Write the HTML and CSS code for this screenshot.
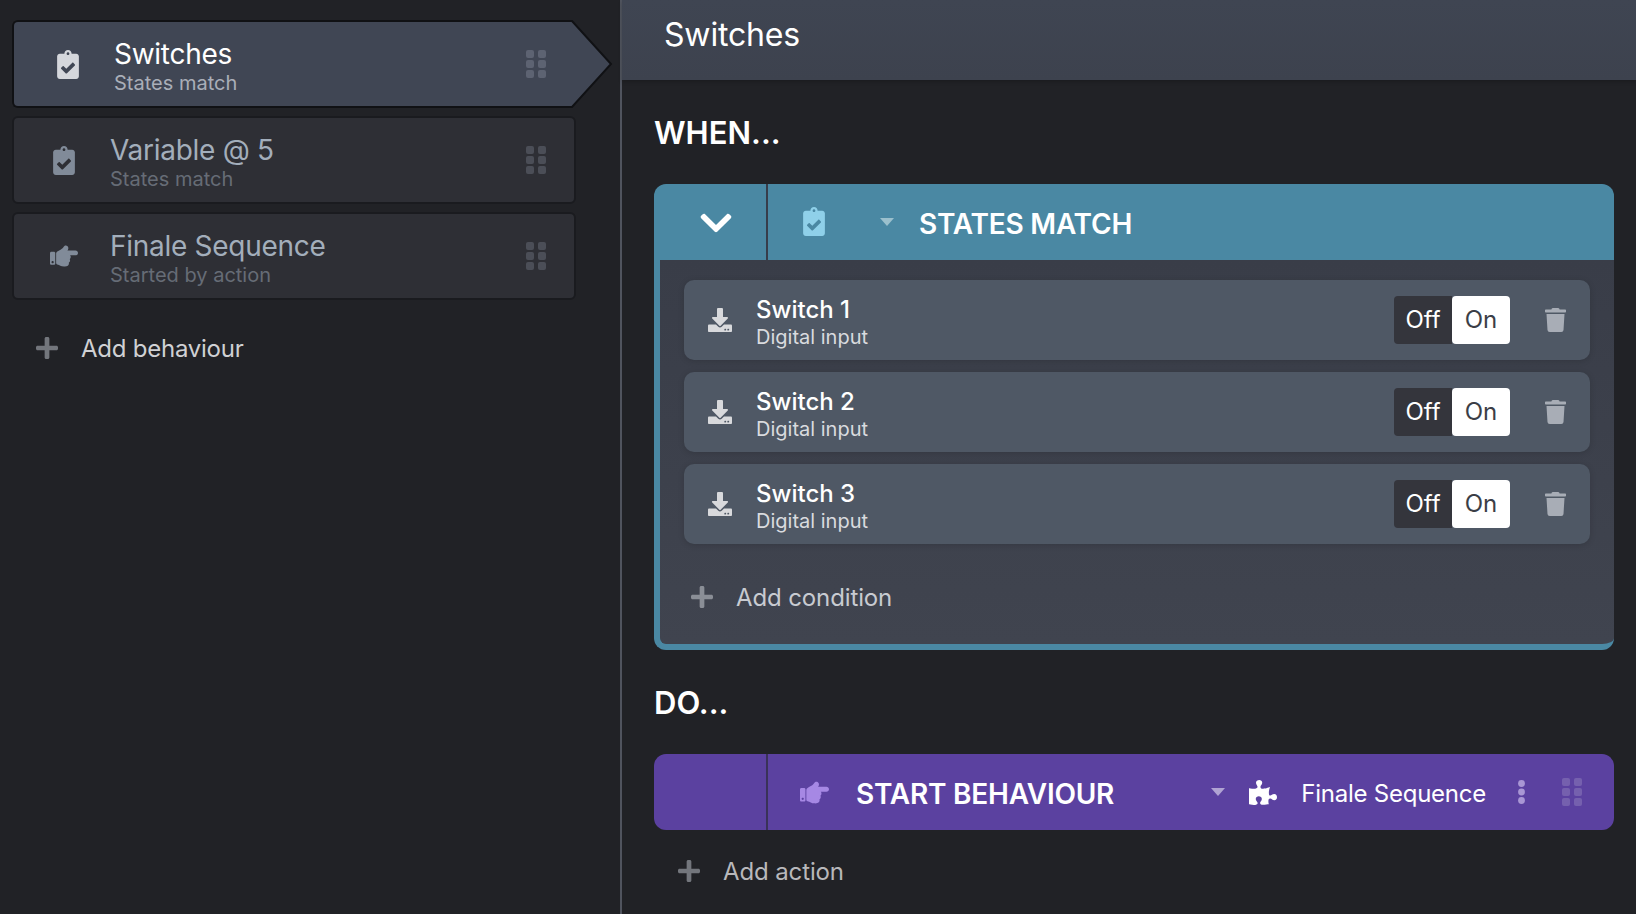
FILE: index.html
```html
<!DOCTYPE html>
<html lang="en">
<head>
<meta charset="utf-8">
<title>Switches</title>
<link rel="stylesheet" href="styles.css">
</head>
<body>
<svg class="sprite" aria-hidden="true">
  <symbol id="i-clip" viewBox="0 0 384 512"><path d="M336 64h-80c0-35.3-28.7-64-64-64s-64 28.7-64 64H48C21.5 64 0 85.5 0 112v352c0 26.5 21.5 48 48 48h288c26.5 0 48-21.5 48-48V112c0-26.5-21.5-48-48-48zM192 40c13.3 0 24 10.7 24 24s-10.7 24-24 24-24-10.7-24-24 10.7-24 24-24zm121.2 231.8l-143 141.8c-4.7 4.7-12.3 4.6-17-.1l-82.6-83.3c-4.7-4.7-4.6-12.3.1-17L99.1 285c4.7-4.7 12.3-4.6 17 .1l46 46.4 106-105.2c4.7-4.7 12.3-4.6 17 .1l28.2 28.4c4.7 4.8 4.6 12.3-.1 17z"/></symbol>
  <symbol id="i-hand" viewBox="0 0 512 512"><path d="M512 199.652c0 23.625-20.65 43.826-44.8 43.826h-99.851c16.34 17.048 18.346 49.766-6.299 70.944 14.288 22.829 2.147 53.017-16.45 62.315C353.574 425.878 322.654 448 272 448c-2.746 0-13.276-.203-16-.195-61.971.168-76.894-31.065-123.731-38.315C120.596 407.683 112 397.599 112 385.786V214.261l.002-.001c.011-18.366 10.607-35.889 28.464-43.845 28.886-12.994 95.413-49.038 107.534-77.323 7.797-18.194 21.384-29.084 40-29.092 34.222-.014 57.752 35.098 44.119 66.908-3.583 8.359-8.312 16.67-14.153 24.918H467.2c23.45 0 44.8 20.543 44.8 43.826zM96 200v192c0 13.255-10.745 24-24 24H24c-13.255 0-24-10.745-24-24V200c0-13.255 10.745-24 24-24h48c13.255 0 24 10.745 24 24zM68 368c0-11.046-8.954-20-20-20s-20 8.954-20 20 8.954 20 20 20 20-8.954 20-20z"/></symbol>
  <symbol id="i-down" viewBox="0 0 512 512"><path d="M216 0h80c13.3 0 24 10.7 24 24v168h87.7c17.8 0 26.7 21.5 14.1 34.1L269.7 378.3c-7.5 7.5-19.8 7.5-27.3 0L90.1 226.1c-12.6-12.6-3.7-34.1 14.1-34.1H192V24c0-13.3 10.7-24 24-24zm296 376v112c0 13.3-10.7 24-24 24H24c-13.3 0-24-10.7-24-24V376c0-13.3 10.7-24 24-24h146.7l49 49c20.1 20.1 52.5 20.1 72.6 0l49-49H488c13.3 0 24 10.7 24 24zm-124 88c0-11-9-20-20-20s-20 9-20 20 9 20 20 20 20-9 20-20zm64 0c0-11-9-20-20-20s-20 9-20 20 9 20 20 20 20-9 20-20z"/></symbol>
  <symbol id="i-trash" viewBox="0 0 448 512"><path d="M432 32H312l-9.4-18.7A24 24 0 0 0 281.1 0H166.8a23.72 23.72 0 0 0-21.4 13.3L136 32H16A16 16 0 0 0 0 48v32a16 16 0 0 0 16 16h416a16 16 0 0 0 16-16V48a16 16 0 0 0-16-16zM53.2 467a48 48 0 0 0 47.9 45h245.8a48 48 0 0 0 47.9-45L416 128H32z"/></symbol>
  <symbol id="i-puzzle" viewBox="0 0 576 512"><path d="M519.442 288.651c-41.519 0-59.5 31.593-82.058 31.593C377.409 320.244 432 144 432 144s-196.288 80-196.288-3.297c0-35.827 36.288-46.25 36.288-85.985C272 19.216 243.885 0 210.539 0c-34.654 0-66.366 18.891-66.366 56.346 0 41.364 31.711 59.277 31.711 81.75C175.885 207.719 0 166.758 0 166.758v333.237s178.635 41.047 178.635-28.662c0-22.473-40-40.107-40-81.471 0-37.456 29.25-56.346 63.577-56.346 33.673 0 61.788 19.216 61.788 54.717 0 39.735-36.288 50.158-36.288 85.985 0 60.803 129.675 25.73 181.23 25.73 0 0-34.725-120.101 25.827-120.101 35.962 0 46.423 36.152 86.308 36.152C556.712 416 576 387.99 576 354.443c0-34.199-18.962-65.792-56.558-65.792z"/></symbol>
  <symbol id="i-chev" viewBox="0 0 448 512"><path d="M207.029 381.476L12.686 187.132c-9.373-9.373-9.373-24.569 0-33.941l22.667-22.667c9.357-9.357 24.522-9.375 33.901-.04L224 284.505l154.745-154.021c9.379-9.335 24.544-9.317 33.901.04l22.667 22.667c9.373 9.373 9.373 24.569 0 33.941L240.971 381.476c-9.373 9.372-24.569 9.372-33.942 0z"/></symbol>
  <symbol id="i-plus" viewBox="0 0 448 448"><path d="M416 176H272V32c0-17.67-14.33-32-32-32h-32c-17.67 0-32 14.33-32 32v144H32c-17.67 0-32 14.33-32 32v32c0 17.67 14.33 32 32 32h144v144c0 17.67 14.33 32 32 32h32c17.67 0 32-14.33 32-32V272h144c17.67 0 32-14.33 32-32v-32c0-17.67-14.33-32-32-32z"/></symbol>
  <symbol id="i-grip" viewBox="0 0 20 28"><rect width="8" height="8" rx="2"/><rect x="12" width="8" height="8" rx="2"/><rect y="10" width="8" height="8" rx="2"/><rect x="12" y="10" width="8" height="8" rx="2"/><rect y="20" width="8" height="8" rx="2"/><rect x="12" y="20" width="8" height="8" rx="2"/></symbol>
  <symbol id="i-kebab" viewBox="0 0 7 24"><circle cx="3.5" cy="3.5" r="3.4"/><circle cx="3.5" cy="12" r="3.4"/><circle cx="3.5" cy="20.5" r="3.4"/></symbol>
</svg>

<div class="app">
  <aside class="sidebar">
    <div class="behaviour selected">
      <svg class="ico-clip"><use href="#i-clip"/></svg>
      <div class="labels">
        <div class="name">Switches</div>
        <div class="sub">States match</div>
      </div>
      <svg class="grip"><use href="#i-grip"/></svg>
      <svg class="arrow" viewBox="0 0 42 88" aria-hidden="true"><path class="arrow-fill" d="M0 1H1L40 44L1 87H0"/></svg>
    </div>
    <div class="behaviour">
      <svg class="ico-clip"><use href="#i-clip"/></svg>
      <div class="labels">
        <div class="name">Variable @ 5</div>
        <div class="sub">States match</div>
      </div>
      <svg class="grip"><use href="#i-grip"/></svg>
    </div>
    <div class="behaviour">
      <svg class="ico-hand"><use href="#i-hand"/></svg>
      <div class="labels">
        <div class="name">Finale Sequence</div>
        <div class="sub">Started by action</div>
      </div>
      <svg class="grip"><use href="#i-grip"/></svg>
    </div>
    <div class="add add-behaviour">
      <svg class="plus"><use href="#i-plus"/></svg>
      <span>Add behaviour</span>
    </div>
  </aside>

  <main class="main">
    <header class="topbar">Switches</header>
    <div class="content">
      <h2 class="section when">WHEN...</h2>
      <section class="card">
        <div class="bar bar-teal">
          <div class="bar-left"><svg class="chev"><use href="#i-chev"/></svg></div>
          <svg class="bar-clip"><use href="#i-clip"/></svg>
          <span class="caret caret-teal"></span>
          <span class="bar-title">STATES MATCH</span>
        </div>
        <div class="card-body">
          <div class="row">
            <svg class="ico-down"><use href="#i-down"/></svg>
            <div class="row-labels"><div class="row-name">Switch 1</div><div class="row-sub">Digital input</div></div>
            <div class="toggle"><span class="off">Off</span><span class="on">On</span></div>
            <svg class="trash"><use href="#i-trash"/></svg>
          </div>
          <div class="row">
            <svg class="ico-down"><use href="#i-down"/></svg>
            <div class="row-labels"><div class="row-name">Switch 2</div><div class="row-sub">Digital input</div></div>
            <div class="toggle"><span class="off">Off</span><span class="on">On</span></div>
            <svg class="trash"><use href="#i-trash"/></svg>
          </div>
          <div class="row">
            <svg class="ico-down"><use href="#i-down"/></svg>
            <div class="row-labels"><div class="row-name">Switch 3</div><div class="row-sub">Digital input</div></div>
            <div class="toggle"><span class="off">Off</span><span class="on">On</span></div>
            <svg class="trash"><use href="#i-trash"/></svg>
          </div>
          <div class="add add-condition">
            <svg class="plus"><use href="#i-plus"/></svg>
            <span>Add condition</span>
          </div>
        </div>
      </section>

      <h2 class="section do">DO...</h2>
      <div class="bar bar-purple">
        <div class="bar-left"></div>
        <svg class="bar-hand"><use href="#i-hand"/></svg>
        <span class="bar-title action-title">START BEHAVIOUR</span>
        <span class="caret caret-purple"></span>
        <svg class="puzzle"><use href="#i-puzzle"/></svg>
        <span class="target">Finale Sequence</span>
        <svg class="kebab"><use href="#i-kebab"/></svg>
        <svg class="grip grip-purple"><use href="#i-grip"/></svg>
      </div>
      <div class="add add-action">
        <svg class="plus"><use href="#i-plus"/></svg>
        <span>Add action</span>
      </div>
    </div>
  </main>
</div>
</body>
</html>
```

FILE: styles.css
```css
* { box-sizing: border-box; }
html, body { margin: 0; height: 100%; }
body {
  background: #212226;
  color: #fff;
  font-family: Inter, "Liberation Sans", sans-serif;
  overflow: hidden;
}
svg { display: block; flex: none; fill: currentColor; }
.sprite { position: absolute; width: 0; height: 0; }

.app { display: flex; height: 914px; }

/* sidebar */
.sidebar {
  width: 622px;
  flex: none;
  border-right: 2px solid #50545e;
  padding: 20px 0 0 12px;
  display: flex;
  flex-direction: column;
  gap: 8px;
}
.behaviour {
  position: relative;
  width: 564px;
  height: 88px;
  display: flex;
  align-items: center;
  padding: 0 28px 0 39px;
  background: #2e2f35;
  border: 2px solid #1a1b1f;
  border-radius: 6px;
  color: #a3aebb;
}
.behaviour.selected {
  width: 559px;
  padding: 0 25px 0 43px;
  background: #404654;
  border-color: #101114;
  border-right: 0;
  border-radius: 6px 0 0 6px;
  color: #fff;
}
.ico-clip { width: 22px; height: 29px; color: #818b99; }
.selected .ico-clip { color: #d5d7dc; }
.ico-hand { width: 28px; height: 28px; margin: 0 -3px 0 -3px; color: #818b99; }
.labels { margin-left: 35px; padding-top: 3px; flex: 1; }
.name { font-size: 28px; line-height: 34px; letter-spacing: -.01em; }
.sub { font-size: 20px; line-height: 24px; color: #666c76; }
.selected .sub { color: #a9aeb8; }
.grip { width: 20px; height: 28px; color: #4b4e57; }
.selected .grip { color: #5d6372; }
.arrow {
  position: absolute;
  left: 100%;
  top: -2px;
  width: 42px;
  height: 88px;
}
.arrow-fill { fill: #404654; stroke: #101114; stroke-width: 2; }

.add { display: flex; align-items: center; font-size: 24px; letter-spacing: -.005em; }
.plus { width: 22px; height: 22px; color: #73767c; }
.add-behaviour { margin: 20px 0 0 24px; height: 40px; color: #d0d1d4; gap: 23px; letter-spacing: -.01em; }

/* main */
.main { flex: 1; min-width: 0; }
.topbar {
  height: 80px;
  background: linear-gradient(#3f4552, #3d424e);
  padding-left: 42px;
  font-size: 32px;
  line-height: 70px;
  letter-spacing: -.005em;
  box-shadow: 0 2px 4px rgba(0, 0, 0, .2);
}
.content { padding: 33px 22px 0 32px; }
.section { margin: 0; font-size: 31px; font-weight: 600; line-height: 40px; }
.when { margin-bottom: 31px; }
.do { margin: 33px 0 31px; }

.bar { display: flex; align-items: center; height: 76px; border-radius: 12px 12px 0 0; }
.bar-teal { background: #4a88a3; }
.bar-purple { background: #5b41a0; border-radius: 12px; }
.bar-left {
  width: 114px;
  height: 100%;
  flex: none;
  display: flex;
  align-items: center;
  justify-content: center;
  border-right: 2px solid #373d4b;
}
.bar-purple .bar-left { border-right-color: #3a3259; }
.chev { width: 32px; height: 36px; margin: 1px 0 0 12px; }
.bar-clip { width: 22px; height: 29px; margin: 0 0 2px 35px; color: #8fd0e9; }
.caret {
  width: 0;
  height: 0;
  border-left: 7px solid transparent;
  border-right: 7px solid transparent;
  border-top: 8px solid;
  flex: none;
}
.caret-teal { margin-left: 55px; border-top-color: #9bc0cd; }
.bar-title { font-size: 28px; font-weight: 600; padding-top: 4px; letter-spacing: -.008em; }
.bar-teal .bar-title { margin-left: 25px; }

.card-body {
  background: linear-gradient(#393d48, #40444f);
  border-left: 6px solid #4a88a3;
  border-bottom: 6px solid #4a88a3;
  border-radius: 0 0 12px 12px;
  padding: 20px 24px 22px;
  display: flex;
  flex-direction: column;
  gap: 12px;
}
.row {
  height: 80px;
  display: flex;
  align-items: center;
  padding: 0 24px;
  background: #4f5865;
  border-radius: 10px;
  box-shadow: 0 1px 6px rgba(0, 0, 0, .15);
}
.ico-down { width: 24px; height: 24px; margin-right: 24px; color: #d8d9dc; }
.row-labels { flex: 1; padding-top: 4px; }
.row-name { font-size: 24px; line-height: 30px; font-weight: 450; }
.row-sub { font-size: 20px; line-height: 24px; color: #d9dbdf; }
.toggle { display: flex; font-size: 24px; line-height: 48px; text-align: center; }
.off { width: 58px; background: #34353c; border-radius: 4px 0 0 4px; }
.on { width: 58px; background: #fff; color: #3b3e47; border-radius: 4px; }
.trash { width: 21px; height: 24px; margin-left: 35px; color: #a8adb6; }

.add-condition { height: 50px; margin-top: 16px; margin-left: 7px; gap: 23px; color: #c8cbd1; }
.add-condition .plus { color: #8a8e96; }

.bar-hand { width: 29px; height: 29px; margin-left: 32px; color: #a688e4; }
.action-title { margin-left: 27px; }
.caret-purple { margin-left: auto; border-top-color: #b0a3d3; }
.puzzle { width: 28px; height: 25px; margin-left: 24px; }
.target { font-size: 24px; margin-left: 24px; padding-top: 2px; letter-spacing: -.01em; }
.kebab { width: 7px; height: 24px; margin-left: 32px; color: #a997d4; }
.grip-purple { margin: 0 32px 0 37px; color: #7560ae; }
.add-action { margin: 21px 0 0 24px; height: 40px; gap: 23px; color: #b8b8bb; }
```
